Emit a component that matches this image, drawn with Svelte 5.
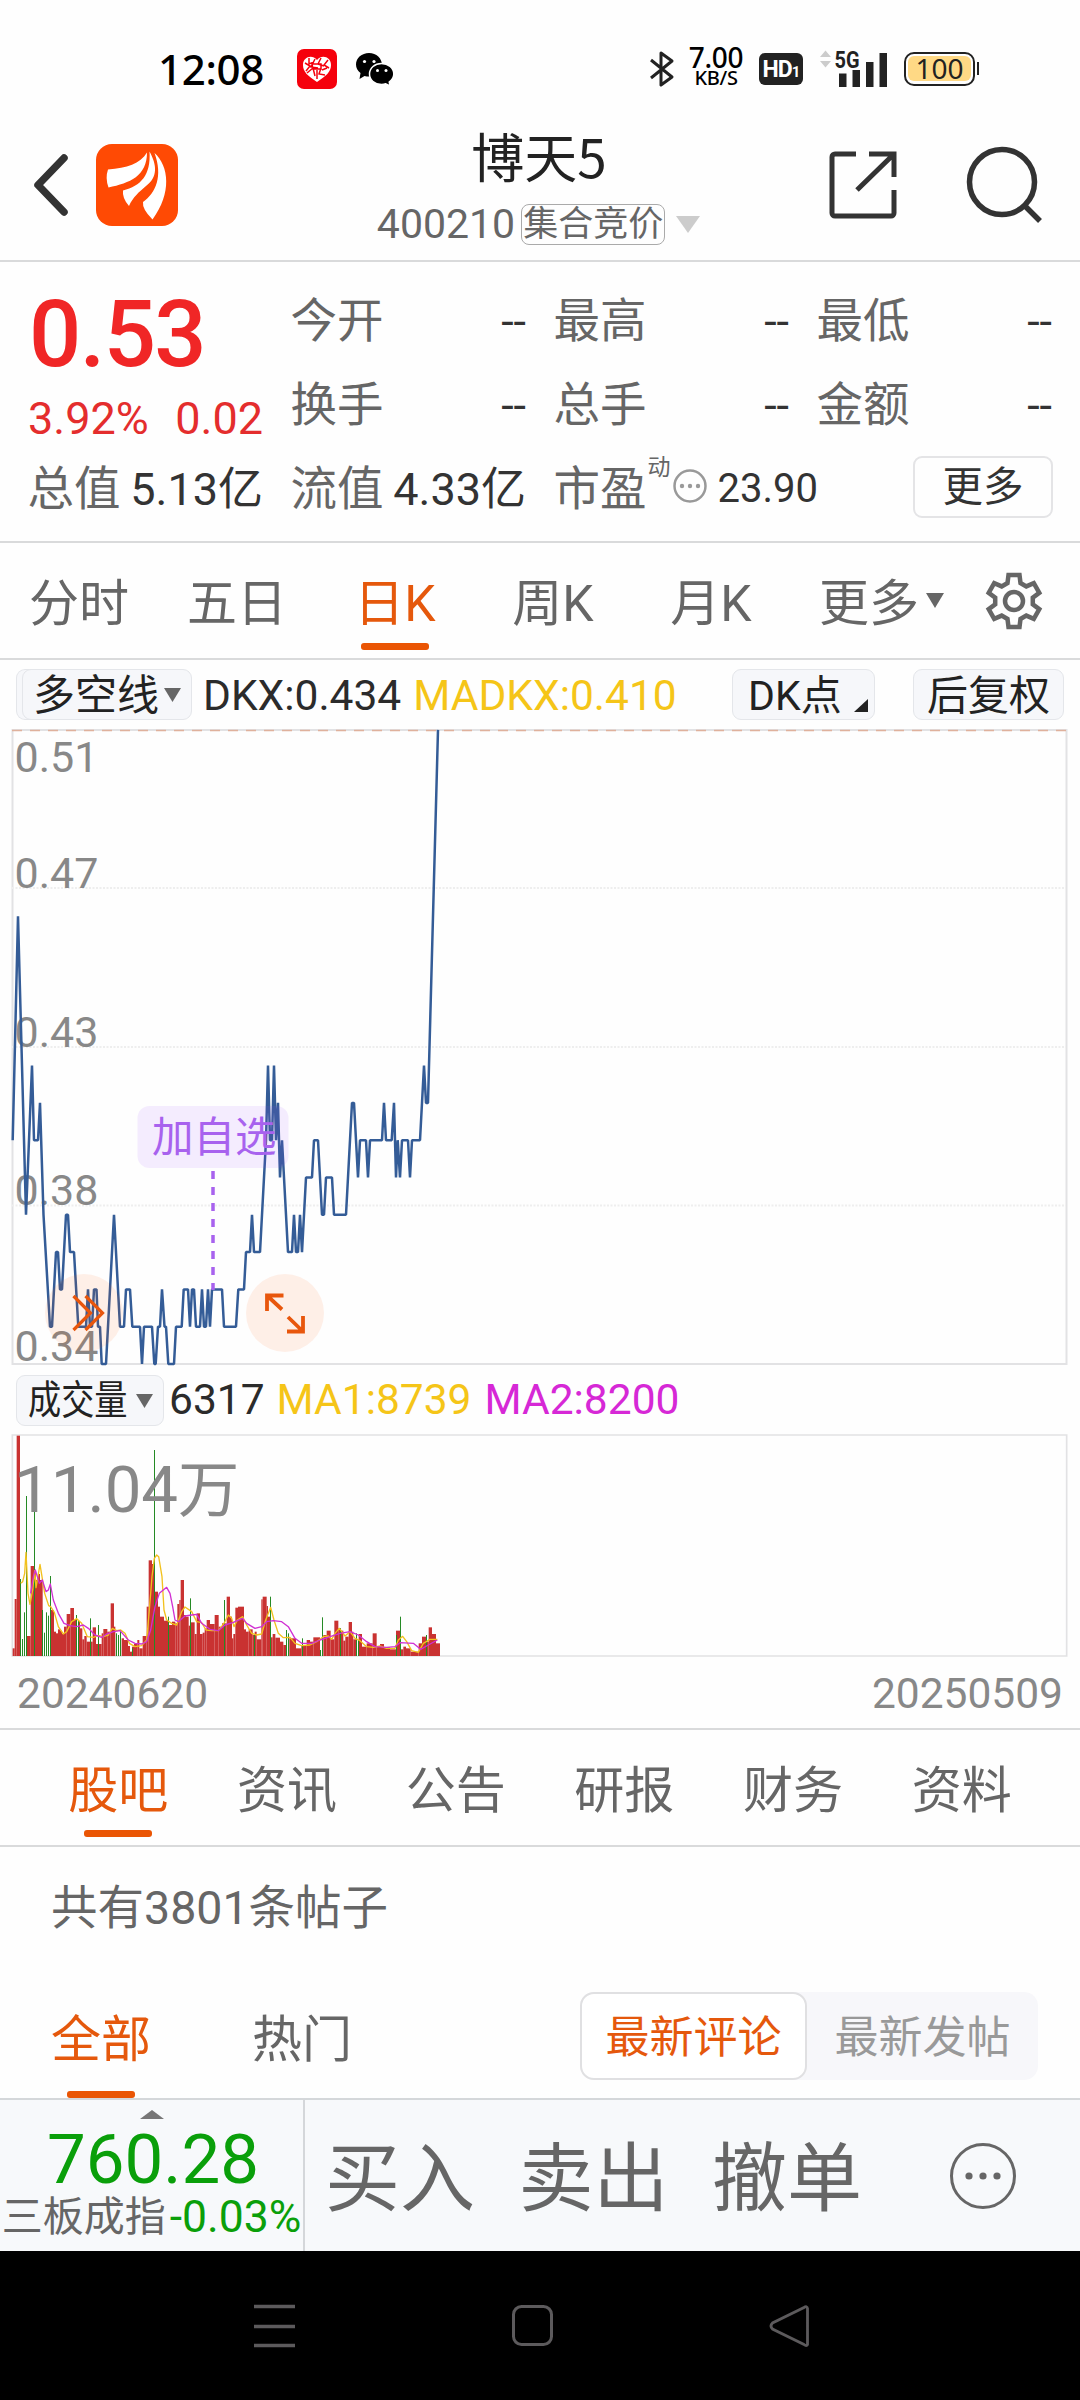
<script>
    const quotes = [
        { label: '今开', value: '--' },
        { label: '最高', value: '--' },
        { label: '最低', value: '--' },
        { label: '换手', value: '--' },
        { label: '总手', value: '--' },
        { label: '金额', value: '--' },
    ];

    const periods = ['分时', '五日', '日K', '周K', '月K', '更多'];
    const sections = ['股吧', '资讯', '公告', '研报', '财务', '资料'];
    const actions = ['买入', '卖出', '撤单'];

    let period = '日K';
    let section = '股吧';
    let feed = '全部';
    let sort = '最新评论';

    // [x, ticks above 0.34]
    const prices = [
        [12.7, 6], [18, 12], [26, 4], [32, 8], [34, 6], [38, 6], [40, 7], [43.5, 4], [50, 1], [52, 1], [56, 3], [58, 3],
        [60, 2], [62, 2], [66, 4], [68, 4], [70, 3], [74, 3], [78.3, 1], [86, 1], [88, 2], [90, 1], [92, 1], [94, 2],
        [96.5, 2], [98, 1], [100, 1], [101.7, 0], [106, 0], [114, 4], [120, 1], [124, 1], [126, 2], [130, 2], [132.3, 1],
        [140, 1], [142, 0], [144, 1], [152, 1], [154.3, 0], [155.7, 0], [158, 1], [160, 1], [162, 2], [164.5, 1], [166, 1],
        [168.3, 0], [174, 0], [176, 1], [181.7, 1], [183.7, 2], [188, 2], [190, 1], [192, 2], [194, 2], [196, 1], [200, 1],
        [202, 2], [204, 1], [206, 1], [208, 2], [210, 1], [212, 2], [222, 2], [224, 1], [236, 1], [238.3, 2], [244, 2],
        [246, 3], [250, 3], [252, 4], [254, 3], [260, 3], [266, 6], [268, 8], [270, 6], [272, 6], [274, 8], [276, 6],
        [278, 7], [280, 5], [282, 6], [284, 5], [288, 3], [292, 3], [294, 4], [296, 3], [298, 3], [300, 4], [302, 3],
        [306, 5], [312, 5], [314, 6], [318, 6], [322, 4], [324, 4], [326, 5], [332, 5], [334, 4], [346, 4], [352, 7],
        [354, 7], [358, 5], [360, 6], [366, 6], [368, 5], [370, 6], [382, 6], [384, 7], [386, 6], [391.7, 6], [394, 7],
        [396, 5], [397.7, 6], [400, 5], [402, 6], [408, 6], [410, 5], [412, 6], [420, 6], [424, 8], [426, 7], [428, 7], [438, 17],
    ];
    const priceLine = prices.map(([x, t]) => `${x},${(634 - t * 37.3).toFixed(1)}`).join(' ');

    const priceLabels = [
        { text: '0.51', y: 42 },
        { text: '0.47', y: 158 },
        { text: '0.43', y: 317 },
        { text: '0.38', y: 475 },
        { text: '0.34', y: 631 },
    ];

    // volume panel works in thirds of a pixel: [from, to, top], base at 663
    const ups = [
        [38, 44, 640], [44, 50, 492], [50, 60, 2], [80, 92, 603], [92, 102, 393], [102, 108, 407], [108, 114, 435],
        [114, 120, 417], [120, 128, 435], [152, 162, 525], [162, 168, 590], [168, 174, 595], [174, 180, 583], [180, 186, 587],
        [186, 192, 597], [192, 200, 575], [200, 211, 537], [211, 222, 519], [222, 230, 555], [234, 240, 560], [240, 247, 580],
        [247, 253, 613], [253, 260, 603], [260, 278, 620], [278, 288, 577], [288, 305, 627], [305, 310, 595], [310, 322, 582],
        [322, 332, 590], [332, 342, 505], [342, 346, 575], [365, 372, 610], [372, 384, 615], [384, 390, 633], [390, 396, 650],
        [396, 402, 635], [402, 412, 627], [412, 418, 615], [418, 428, 640], [428, 440, 603], [440, 446, 515], [446, 456, 376],
        [456, 462, 387], [462, 474, 470], [474, 480, 515], [480, 492, 545], [492, 506, 557], [506, 516, 570], [516, 526, 560],
        [526, 532, 565], [532, 538, 507], [538, 542, 495], [542, 552, 435], [552, 558, 540], [558, 566, 545], [566, 571, 572],
        [571, 584, 562], [584, 590, 597], [590, 600, 535], [600, 608, 597], [608, 614, 593], [614, 620, 580], [620, 630, 555],
        [630, 644, 567], [644, 656, 540], [656, 666, 575], [666, 680, 565], [680, 690, 485], [690, 696, 545], [696, 700, 610],
        [700, 706, 597], [706, 714, 518], [714, 732, 515], [732, 738, 583], [738, 746, 590], [746, 758, 583], [758, 764, 600],
        [764, 770, 590], [770, 784, 613], [784, 788, 493], [788, 800, 485], [800, 804, 513], [804, 812, 545], [812, 818, 607],
        [818, 826, 597], [826, 840, 608], [840, 850, 620], [850, 858, 630], [868, 888, 610], [888, 904, 640], [904, 920, 630],
        [920, 930, 615], [930, 940, 620], [940, 960, 607], [970, 980, 600], [980, 992, 587], [992, 1003, 613], [1003, 1015, 557],
        [1015, 1022, 580], [1022, 1030, 587], [1030, 1036, 617], [1036, 1046, 605], [1046, 1056, 561], [1056, 1060, 590],
        [1060, 1070, 613], [1076, 1086, 597], [1086, 1100, 635], [1100, 1118, 625], [1118, 1130, 595], [1130, 1140, 633],
        [1140, 1152, 627], [1152, 1170, 637], [1170, 1188, 643], [1188, 1202, 587], [1202, 1210, 643], [1210, 1218, 635],
        [1218, 1232, 640], [1232, 1256, 650], [1256, 1266, 625], [1266, 1280, 605], [1280, 1286, 620], [1286, 1296, 577],
        [1296, 1308, 597], [1308, 1320, 625],
    ];
    const downs = [
        [62, 432], [68, 612], [74, 532], [80, 183], [104, 195], [128, 525], [134, 593], [140, 532], [146, 542], [152, 423],
        [230, 540], [236, 555], [271, 550], [295, 570], [349, 595], [355, 600], [361, 590], [398, 640], [464, 45], [505, 545], [571, 490],
        [674, 495], [764, 600], [811, 485], [860, 585], [866, 595], [907, 610], [962, 645], [967, 547], [1020, 580], [1070, 595], [1075, 615],
        [1190, 600], [1201, 545], [1279, 600],
    ];
    const ma1 = '62,445 68,440 74,415 78,352 84,475 90,508 98,465 104,407 108,458 120,388 126,425 134,475 146,512 152,515 163,532 175,575 190,597 200,590 215,560 230,551 245,565 262,605 280,607 295,601 310,605 325,600 337,580 350,587 362,585 375,595 388,625 405,635 425,632 440,615 448,525 456,425 463,370 470,360 476,365 486,425 492,525 500,555 515,565 530,570 545,530 555,516 575,530 590,560 605,563 618,585 635,587 655,587 672,565 685,540 695,550 702,575 712,555 728,545 740,570 755,595 770,600 785,597 797,555 812,517 822,555 835,595 850,608 870,607 885,625 905,632 930,630 950,620 970,605 985,603 995,613 1005,595 1018,580 1035,603 1050,590 1065,610 1080,617 1100,635 1120,637 1140,633 1160,640 1185,640 1195,615 1208,604 1220,620 1235,647 1255,652 1270,625 1290,613 1312,613';
    const ma2 = '92,475 100,425 106,405 112,425 118,445 127,435 138,470 145,465 151,447 160,495 175,535 192,565 210,572 230,575 250,570 265,580 285,600 305,607 320,597 340,590 360,587 385,615 405,625 425,627 440,620 452,585 465,515 478,475 500,457 510,475 518,515 525,555 535,560 555,543 575,540 590,538 605,565 630,583 655,587 675,570 700,562 728,550 740,565 765,580 785,575 800,560 820,557 845,560 865,575 885,610 905,625 935,625 960,615 990,605 1020,595 1050,590 1075,600 1100,620 1125,635 1160,637 1185,635 1200,623 1240,625 1262,643 1285,630 1312,615';
</script>

<div class="screen">
    <div class="status">
        <span class="time">12:08</span>
        <svg class="app-badge" width="40" height="40" viewBox="0 0 40 40">
            <rect width="40" height="40" rx="7" fill="#f5000c" />
            <path d="M20 33C11 27 6 23 6 16c0-8 9-11 14-5 5-6 14-3 14 5 0 7-5 11-14 17z" fill="#fff" />
            <path d="M8 14l5 3-4 5M12 9v6l5-2M18 10l-4 8 7 1M24 9l-3 6 6 2M31 11l-4 5 5 3M10 24l6-5 2 8M20 21v9M24 19l-2 6 6 1M30 19l-5 2M15 15h9v5h-8z" fill="none" stroke="#f5000c" stroke-width="1.5" />
        </svg>
        <svg class="wechat" width="38" height="33" viewBox="0 0 38 33">
            <path d="M13 0C5.800 0 0 5 0 11.500c0 3.500 1.700 6.500 4.500 8.500L3.500 26l5-3c1.500.5 3 .6 4.500.6C20 23.600 26 18.500 26 12S20.500 0 13 0z" />
            <path d="M25.500 10.500C18.800 10.500 13.500 15 13.500 21s5.300 10.500 12 10.500c1.500 0 3-.2 4.200-.7l4.500 2.200-1-4c2.800-2 4.600-4.600 4.600-8 0-6-5.600-10.500-12.300-10.500z" stroke="#fff" stroke-width="1.500" />
            <g fill="#fff"><circle cx="8.500" cy="8.500" r="1.600" /><circle cx="18" cy="8.500" r="1.600" /><circle cx="21.500" cy="17.500" r="1.500" /><circle cx="30" cy="17.500" r="1.500" /></g>
        </svg>
        <div class="status-right">
            <svg width="24" height="38" viewBox="0 0 24 38" fill="none" stroke="#222" stroke-width="3">
                <path d="M1 10l21 17-11 8V3l11 8L1 28" stroke-linejoin="round" />
            </svg>
            <div class="speed"><b>7.00</b><i>KB/S</i></div>
            <div class="hd">HD<small>1</small></div>
            <svg class="signal" width="68" height="38" viewBox="0 0 68 38">
                <path d="M0 7l5.500-6.500L11 7zM0 11h11l-5.500 6.500z" fill="#ccc" />
                <text x="14.500" y="17.500" textLength="25" lengthAdjust="spacingAndGlyphs">5G</text>
                <path d="M19 23.500h7.500V37H19zM32.500 20H40v17h-7.500zM46 12h7.500v25H46zM59.500 3H67v34h-7.500z" fill="#222" />
            </svg>
            <div class="battery"><span>100</span></div>
        </div>
    </div>

    <header>
        <svg class="back" width="36" height="62" viewBox="0 0 36 62" fill="none" stroke="#333" stroke-width="7.500" stroke-linecap="round" stroke-linejoin="round">
            <path d="M31 4L5 31l26 27" />
        </svg>
        <svg class="logo" width="82" height="82" viewBox="0 0 82 82">
            <rect width="82" height="82" rx="16" fill="#ff4a04" />
            <g fill="#fff">
                <path d="M51 8.500C44 20 31 24 12 25.500Q9 34 12.500 43.500C34 39 51 32 51 8.500z" />
                <path d="M53.500 7.500C61 21 62 33 50 42 43 48 37 53 33 62Q26 54 27 46.500C45 42 55 31 53.500 7.500z" />
                <path d="M58.500 9C73 22 76 49 56.500 75.500Q46 65 47 58C60 49 67 32 58.500 9z" />
            </g>
        </svg>
        <div class="title">
            <h1>博天5</h1>
            <div class="code">
                <span>400210</span>
                <span class="tag">集合竞价</span>
                <svg width="26" height="17" viewBox="0 0 26 17"><path d="M1 0h24L13 17z" fill="#ccc" /></svg>
            </div>
        </div>
        <svg class="share" width="68" height="68" viewBox="0 0 68 68" fill="none" stroke="#333" stroke-width="5">
            <path d="M27 3H6a3 3 0 0 0-3 3v56a3 3 0 0 0 3 3h56a3 3 0 0 0 3-3V39M40 3h25v23M65 3L28 39" />
        </svg>
        <svg class="search" width="78" height="78" viewBox="0 0 78 78" fill="none" stroke="#333" stroke-width="5.500">
            <circle cx="36" cy="36" r="32.500" />
            <path d="M58.500 59.500L74 75" />
        </svg>
    </header>

    <section class="quote">
        <div class="last">
            <div class="price">0.53</div>
            <div class="change"><span>3.92%</span><span>0.02</span></div>
        </div>
        {#each quotes as q}
            <div class="cell"><label>{q.label}</label><span>{q.value}</span></div>
        {/each}
        <div class="cell"><label>总值</label><span>5.13亿</span></div>
        <div class="cell"><label>流值</label><span>4.33亿</span></div>
        <div class="cell pe">
            <label>市盈</label><sup>动</sup>
            <svg width="34" height="34" viewBox="0 0 34 34">
                <circle cx="17" cy="17" r="15.500" fill="none" stroke="#999" stroke-width="2.500" />
                <g fill="#999"><circle cx="9" cy="17" r="2.200" /><circle cx="17" cy="17" r="2.200" /><circle cx="25" cy="17" r="2.200" /></g>
            </svg>
            <span>23.90</span>
        </div>
        <div class="cell"><button class="more">更多</button></div>
    </section>

    <nav class="periods">
        {#each periods as p}
            <div class="tab" class:active={p === period}>
                <span>{p}</span>
                {#if p === '更多'}
                    <svg class="caret" width="18" height="15" viewBox="0 0 18 15"><path d="M0 0h18L9 15z" fill="#666" /></svg>
                {/if}
            </div>
        {/each}
        <svg class="gear" width="58" height="58" viewBox="0 0 58 58" fill="none" stroke="#666" stroke-width="4.500">
            <path d="M23.500 3h11l1 8 5.800 3.400 7.500-3.200 5.500 9.600-6.500 4.800v6.800l6.500 4.800-5.500 9.600-7.500-3.200-5.800 3.400-1 8h-11l-1-8-5.800-3.400-7.500 3.200-5.500-9.600 6.500-4.800v-6.800l-6.500-4.800 5.500-9.600 7.500 3.200 5.800-3.400z" />
            <circle cx="29" cy="29" r="9" />
        </svg>
    </nav>

    <div class="indicator">
        <div class="chip stacked"><span>多空线</span><svg width="17" height="14" viewBox="0 0 17 14"><path d="M0 0h17L8.500 14z" fill="#666" /></svg></div>
        <span class="dkx">DKX:0.434</span>
        <span class="yellow">MADKX:0.410</span>
        <div class="chip dk"><span>DK点</span><svg width="14" height="13" viewBox="0 0 14 13"><path d="M14 0v13H0z" fill="#222" /></svg></div>
        <div class="chip adj"><span>后复权</span></div>
    </div>

    <svg class="chart" width="1080" height="638" viewBox="0 -1 1080 638">
        <g fill="none" stroke="#e2e2e4" stroke-width="2">
            <path d="M12.500 0V634H1066.500V0z" />
            <path d="M12 158H1066M12 317H1066M12 475.500H1066" stroke="#eee" stroke-dasharray="2 1.500" />
            <path d="M12 .500H1066" stroke="#dfb19c" stroke-width="1.500" stroke-dasharray="10 8" />
        </g>
        {#each priceLabels as l}
            <text x="14.500" y={l.y}>{l.text}</text>
        {/each}
        <polyline points={priceLine} fill="none" stroke="#345c97" stroke-width="2.500" stroke-linejoin="bevel" />
        <g class="watch">
            <rect x="137.500" y="376" width="151" height="62" rx="12" />
            <text x="152" y="421.500">加自选</text>
            <path d="M213 441V560" />
        </g>
        <g fill="#ff5a00" fill-opacity=".09"><circle cx="84" cy="583" r="39" /><circle cx="285" cy="583" r="39" /></g>
        <g fill="none" stroke="#e8560c" stroke-width="3.200">
            <path d="M73.500 566l17 17-17 17M85.500 566l17 17-17 17" />
            <path d="M283.500 565.500H267V581M267 565.500l15 14M287 601.500h16V586M303 601.500l-15-14.500" stroke-width="3.800" />
        </g>
    </svg>

    <div class="volume-head">
        <div class="chip vol"><span>成交量</span><svg width="17" height="14" viewBox="0 0 17 14"><path d="M0 0h17L8.500 14z" fill="#666" /></svg></div>
        <span>6317</span>
        <span class="yellow">MA1:8739</span>
        <span class="magenta">MA2:8200</span>
    </div>

    <svg class="volume" width="1080" height="223" viewBox="0 -3 3240 669">
        <path d="M37 0V663H3200V0z" fill="none" stroke="#e2e2e4" stroke-width="5" />
        {#each ups as [from, to, top]}
            <rect x={from} y={top} width={to - from} height={663 - top} fill="#c93231" />
        {/each}
        {#each downs as [x, top]}
            <rect x={x - (x % 3)} y={top} width="3" height={663 - top} fill="#258a25" />
        {/each}
        <polyline points={ma1} fill="none" stroke="#f2c11d" stroke-width="4" stroke-linejoin="round" />
        <polyline points={ma2} fill="none" stroke="#d02fd3" stroke-width="4" stroke-linejoin="round" />
        <text x="42" y="232">11.04<tspan font-size="184">万</tspan></text>
    </svg>

    <div class="dates"><span>20240620</span><span>20250509</span></div>

    <nav class="sections">
        {#each sections as s}
            <div class="tab" class:active={s === section}><span>{s}</span></div>
        {/each}
    </nav>

    <div class="count">共有3801条帖子</div>

    <div class="feed">
        {#each ['全部', '热门'] as f}
            <div class="tab" class:active={f === feed}><span>{f}</span></div>
        {/each}
        <div class="sort">
            {#each ['最新评论', '最新发帖'] as s}
                <div class:on={s === sort}>{s}</div>
            {/each}
        </div>
    </div>

    <footer>
        <div class="index">
            <svg width="24" height="9" viewBox="0 0 24 9"><path d="M0 9L12 0l12 9z" fill="#777" /></svg>
            <div class="points">760.28</div>
            <div class="name"><span>三板成指</span><b>-0.03%</b></div>
        </div>
        {#each actions as a}
            <div class="action">{a}</div>
        {/each}
        <svg class="dots" width="66" height="66" viewBox="0 0 66 66">
            <circle cx="33" cy="33" r="31.500" fill="none" stroke="#666" stroke-width="3" />
            <g fill="#666"><circle cx="19" cy="33" r="3.600" /><circle cx="33" cy="33" r="3.600" /><circle cx="47" cy="33" r="3.600" /></g>
        </svg>
    </footer>

    <div class="system">
        <svg width="42" height="44" viewBox="0 0 42 44"><path d="M0 2.500h41M0 22.500h41M0 41.500h41" stroke="#5c5a5c" stroke-width="3.500" /></svg>
        <svg width="42" height="42" viewBox="0 0 42 42"><rect x="1.500" y="1.500" width="38" height="38" rx="8" fill="none" stroke="#5c5a5c" stroke-width="3" /></svg>
        <svg width="42" height="42" viewBox="0 0 42 42"><path d="M38.500 3.500v36q-1 2-3.500 0L3.500 24q-3-3 0-6L35 2.500q3-2 3.500 1z" fill="none" stroke="#5c5a5c" stroke-width="2.800" /></svg>
    </div>
</div>

<style>
    :global(body) {
        margin: 0;
        background: #fff;
    }

    .screen {
        width: 1080px;
        height: 2400px;
        overflow: hidden;
        display: flex;
        flex-direction: column;
        background: #fefefe;
        color: #2b2b2b;
        font-family: Roboto, "Noto Sans CJK SC", sans-serif;
        line-height: 1;
        white-space: nowrap;
    }

    .screen > * {
        flex: none;
        box-sizing: border-box;
    }

    svg {
        display: block;
        flex: none;
        overflow: visible;
    }

    .status {
        height: 130px;
        padding: 8px 105px 0 158px;
        display: flex;
        align-items: center;
        color: #000;
    }

    .time {
        font: 500 42px/1 "Noto Sans", sans-serif;
        width: 139px;
        letter-spacing: -0.3px;
    }

    .wechat {
        margin-left: 19px;
    }

    .status-right {
        margin-left: auto;
        display: flex;
        align-items: center;
    }

    .speed {
        width: 56px;
        margin: -6px 15px 0 14px;
        display: flex;
        flex-direction: column;
        align-items: center;
        font-family: "Noto Sans", sans-serif;
    }

    .speed b {
        font-weight: 500;
        font-size: 28px;
        line-height: 22px;
        letter-spacing: -0.3px;
    }

    .speed i {
        font-style: normal;
        font-weight: 500;
        font-size: 20px;
        line-height: 19px;
        letter-spacing: -0.3px;
    }

    .hd {
        width: 44px;
        height: 32px;
        margin-right: 17px;
        border-radius: 6px;
        background: #222;
        color: #fff;
        font-weight: 700;
        font-size: 23px;
        line-height: 33px;
        text-align: center;
        letter-spacing: -1px;
    }

    .hd small {
        font-size: 15px;
    }

    .signal text {
        font: 700 24px Roboto, sans-serif;
        fill: #222;
    }

    .battery {
        position: relative;
        width: 71px;
        height: 34px;
        margin-left: 16px;
        padding: 2px;
        box-sizing: border-box;
        border: 2.5px solid #222;
        border-radius: 10px;
    }

    .battery span {
        display: block;
        height: 25px;
        border-radius: 6px;
        background: #ffd985;
        font: 400 28px/25px "Noto Sans", sans-serif;
        text-align: center;
        color: #222;
    }

    .battery::after {
        content: '';
        position: absolute;
        right: -6px;
        top: 8px;
        width: 2.5px;
        height: 13px;
        background: #222;
    }

    header {
        height: 132px;
        padding: 0 36px 0 33px;
        display: flex;
        align-items: center;
        border-bottom: 2px solid #d9dadb;
    }

    .back, .logo, .share, .search {
        margin-bottom: 20px;
    }

    .logo {
        margin-left: 27px;
    }

    .title {
        margin-left: 198px;
        width: 326px;
        height: 130px;
        display: flex;
        flex-direction: column;
        align-items: center;
    }

    h1 {
        margin: -1px 0 0;
        font: 400 53px/53px "Noto Sans CJK SC", sans-serif;
        color: #222;
    }

    .code {
        margin-top: 22px;
        display: flex;
        align-items: center;
        color: #666;
        font-size: 41px;
    }

    .tag {
        margin: 0 10px 0 6px;
        height: 41px;
        box-sizing: border-box;
        padding: 0 1px;
        border: 1.5px solid #aaa;
        border-radius: 8px;
        font-size: 35px;
        line-height: 40px;
    }

    .share {
        margin-left: 127px;
    }

    .search {
        margin-left: auto;
    }

    .quote {
        height: 281px;
        padding: 16px 0 0 29px;
        display: grid;
        grid-template-columns: repeat(4, 234px);
        grid-auto-rows: 84px;
        column-gap: 29px;
        border-bottom: 2px solid #d9dadb;
    }

    .last {
        grid-row: span 2;
        color: #f02626;
    }

    .price {
        margin-top: 11px;
        font-size: 92px;
        font-weight: 500;
        letter-spacing: -1.6px;
    }

    .change {
        margin: 15px 0 0 -1px;
        display: flex;
        justify-content: space-between;
        font-size: 45px;
        color: #e42d2d;
    }

    .cell {
        display: flex;
        align-items: center;
        justify-content: space-between;
        padding-top: 2px;
        font-size: 45px;
        color: #333;
    }

    .cell label {
        margin-left: -1.5px;
        font-size: 46.500px;
        color: #666;
    }

    .pe {
        width: 263px;
        justify-content: flex-start;
    }

    .pe sup {
        margin: -44px 2px 0 1px;
        font-size: 23px;
        line-height: 23px;
        color: #666;
    }

    .pe svg {
        margin-top: -6px;
    }

    .pe span {
        margin-left: 11px;
        font-size: 40px;
    }

    .more {
        width: 140px;
        height: 62px;
        margin: -4px -1px 0 auto;
        padding: 0;
        border: 2px solid #e4e4e6;
        border-radius: 9px;
        background: none;
        font: inherit;
        font-size: 40.500px;
        color: #333;
    }

    .tab {
        position: relative;
        display: flex;
        align-items: center;
        justify-content: center;
        padding-top: 6px;
        box-sizing: border-box;
        font-size: 50px;
        color: #666;
    }

    .tab.active {
        color: #e5580c;
    }

    .tab.active::after {
        content: '';
        position: absolute;
        left: calc(50% - 34px);
        bottom: 8px;
        width: 68px;
        height: 7px;
        border-radius: 3px;
        background: #ea5504;
    }

    .periods {
        height: 117px;
        display: flex;
        align-items: center;
        border-bottom: 2px solid #d9dadb;
    }

    .periods .tab {
        width: 158px;
        height: 115px;
    }

    .caret {
        position: absolute;
        right: 4px;
        top: 50px;
    }

    .gear {
        margin-left: 37px;
    }

    .indicator, .volume-head {
        height: 69px;
        padding: 0 16px;
        display: flex;
        align-items: center;
        font-size: 42.500px;
    }

    .indicator > span, .indicator .chip span {
        margin-top: 3px;
    }

    .chip {
        height: 51px;
        box-sizing: border-box;
        display: flex;
        align-items: center;
        border: 1.5px solid #e4e6ea;
        border-radius: 9px;
        background: #f6f7fa;
        color: #222;
        font-size: 42px;
    }

    .stacked {
        width: 170px;
        margin: 0 11px 0 6px;
        padding-left: 10px;
        gap: 5px;
        box-shadow: -6px 0 0 -1px #f6f7fa, -6px 0 0 0 #e4e6ea;
    }

    .yellow {
        margin-left: 12px;
        color: #f5c518;
    }

    .magenta {
        margin-left: 13px;
        color: #d628d6;
    }

    .dk {
        width: 143px;
        margin-left: auto;
        padding-left: 15px;
        font-size: 41px;
    }

    .dk svg {
        margin: 22px 6px 0 auto;
    }

    .adj {
        width: 151px;
        margin-left: 38px;
        justify-content: center;
        font-size: 41px;
    }

    .chart text {
        font-size: 43px;
        fill: #888;
    }

    .watch rect {
        fill: #a050ff;
        fill-opacity: 0.1;
    }

    .chart .watch text {
        font-size: 41.500px;
        fill: #a862ee;
    }

    .watch path {
        stroke: #a862ee;
        stroke-width: 3.5;
        stroke-dasharray: 8 8;
    }

    .volume-head {
        height: 67px;
    }

    .vol {
        width: 148px;
        margin-right: 5px;
        padding: 0 10px 0 11px;
        justify-content: space-between;
        font-size: 39.500px;
    }

    .vol span {
        width: 99px;
        transform: scaleX(0.84);
        transform-origin: left;
    }

    .volume text {
        font-size: 196px;
        fill: #888;
    }

    .dates {
        height: 71px;
        padding: 4px 17px 0;
        display: flex;
        align-items: center;
        justify-content: space-between;
        font-size: 42.500px;
        color: #888;
    }

    .sections {
        height: 119px;
        padding: 0 34px;
        display: flex;
        border-top: 2px solid #d9dadb;
        border-bottom: 2px solid #d9dadb;
    }

    .sections .tab {
        flex: 1;
    }

    .count {
        height: 122px;
        padding-left: 51px;
        font-size: 46.500px;
        line-height: 122px;
        color: #666;
    }

    .feed {
        height: 129px;
        padding: 0 42px 0 51px;
        display: flex;
        align-items: center;
    }

    .feed .tab {
        width: 100px;
        height: 129px;
        margin-right: 101px;
        padding-top: 12px;
    }

    .feed .tab.active::after {
        bottom: 0;
    }

    .sort {
        width: 458px;
        height: 88px;
        margin: 5px 0 0 auto;
        display: flex;
        border-radius: 14px;
        background: #f7f7fa;
        font-size: 44px;
        color: #999;
    }

    .sort div {
        flex: 1;
        display: flex;
        align-items: center;
        justify-content: center;
        padding-top: 3px;
    }

    .sort .on {
        flex: none;
        width: 227px;
        box-sizing: border-box;
        border: 2px solid #e0e0e2;
        border-radius: 14px;
        background: #fff;
        color: #e5580c;
    }

    footer {
        height: 153px;
        display: flex;
        align-items: center;
        border-top: 2px solid #d4d7da;
        background: #f7f9fb;
        color: #666;
    }

    .index {
        width: 305px;
        height: 151px;
        margin-right: 20px;
        box-sizing: border-box;
        padding-top: 10px;
        display: flex;
        flex-direction: column;
        align-items: center;
        border-right: 2px solid #d4d7da;
    }

    .points {
        margin: 6px 0 0 3px;
        font-size: 69px;
        color: #0a9f0a;
    }

    .name {
        display: flex;
        align-items: center;
        gap: 4px;
        margin-top: 1px;
        font-size: 41px;
    }

    .name b {
        font-weight: 400;
        font-size: 44.500px;
        color: #0a9f0a;
    }

    .action {
        width: 193.500px;
        padding-top: 7px;
        font-size: 75px;
    }

    .dots {
        margin-left: 44px;
    }

    .system {
        flex: 1;
        padding: 0 269px 0 254px;
        display: flex;
        align-items: center;
        justify-content: space-between;
        background: #000;
    }
</style>
